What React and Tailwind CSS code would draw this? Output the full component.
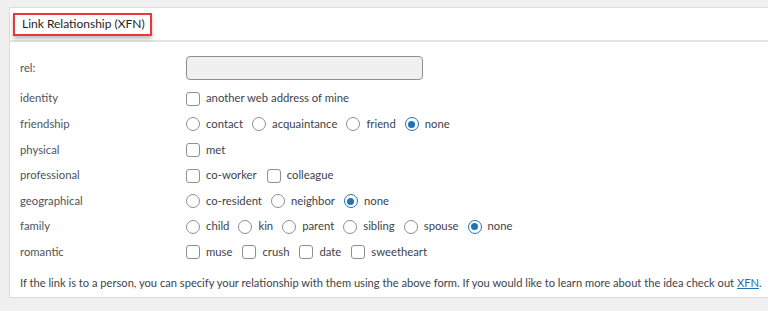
import React from "react";

const font = { fontFamily: 'Lato, "Noto Sans", Arial, sans-serif' };

function Box({ label }) {
  return (
    <span className="inline-flex items-center mr-[10px]">
      <span className="w-[14px] h-[14px] rounded-[3px] border border-[#8c8f94] bg-white mr-[6px]" />
      <span>{label}</span>
    </span>
  );
}

function Radio({ label, checked }) {
  return (
    <span className="inline-flex items-center mr-[9px]">
      <span
        className={`w-[14px] h-[14px] rounded-full border bg-white mr-[6px] flex items-center justify-center ${
          checked ? "border-[#2271b1]" : "border-[#8c8f94]"
        }`}
      >
        {checked && <span className="w-[7px] h-[7px] rounded-full bg-[#2271b1]" />}
      </span>
      <span>{label}</span>
    </span>
  );
}

function Row({ label, children }) {
  return (
    <div className="flex items-center h-[25.6px]">
      <div className="w-[166px] text-[#4d545b]">{label}</div>
      <div className="flex items-center text-[#3c434a]">{children}</div>
    </div>
  );
}

export default function App() {
  return (
    <div className="w-[768px] h-[311px] bg-[#f0f0f1] pl-[9px] pt-[7px] overflow-hidden text-[11.3px]" style={font}>
      <div className="bg-white border-l border-t border-b border-[#dcdcde] h-[291px]">
        <div className="h-[34px] border-b-[2px] border-[#e4e4e6] flex items-center pl-[3px]">
          <div className="h-[23px] pl-[7px] pr-[5px] flex items-center whitespace-nowrap border-2 border-[#e8383d] shadow-[0_3px_4px_rgba(0,0,0,0.25)] text-[12px] text-[#1d2327]">
            Link Relationship (XFN)
          </div>
        </div>
        <div className="pl-[10px] pt-[12px]">
          <div className="flex items-center h-[28px] mb-[4px]">
            <div className="w-[166px] text-[#4d545b]">rel:</div>
            <div className="w-[237px] h-[24px] rounded-[4px] border border-[#8c8f94] bg-[#f0f0f1]" />
          </div>
          <Row label="identity">
            <Box label="another web address of mine" />
          </Row>
          <Row label="friendship">
            <Radio label="contact" />
            <Radio label="acquaintance" />
            <Radio label="friend" />
            <Radio label="none" checked />
          </Row>
          <Row label="physical">
            <Box label="met" />
          </Row>
          <Row label="professional">
            <Box label="co-worker" />
            <Box label="colleague" />
          </Row>
          <Row label="geographical">
            <Radio label="co-resident" />
            <Radio label="neighbor" />
            <Radio label="none" checked />
          </Row>
          <Row label="family">
            <Radio label="child" />
            <Radio label="kin" />
            <Radio label="parent" />
            <Radio label="sibling" />
            <Radio label="spouse" />
            <Radio label="none" checked />
          </Row>
          <Row label="romantic">
            <Box label="muse" />
            <Box label="crush" />
            <Box label="date" />
            <Box label="sweetheart" />
          </Row>
          <p className="mt-[9px] leading-[18px] text-[11.15px] text-[#3c434a] whitespace-nowrap">
            If the link is to a person, you can specify your relationship with them using the above form. If you would like to learn more about the idea check out{" "}
            <a className="text-[#2271b1] underline">XFN</a>.
          </p>
        </div>
      </div>
    </div>
  );
}
